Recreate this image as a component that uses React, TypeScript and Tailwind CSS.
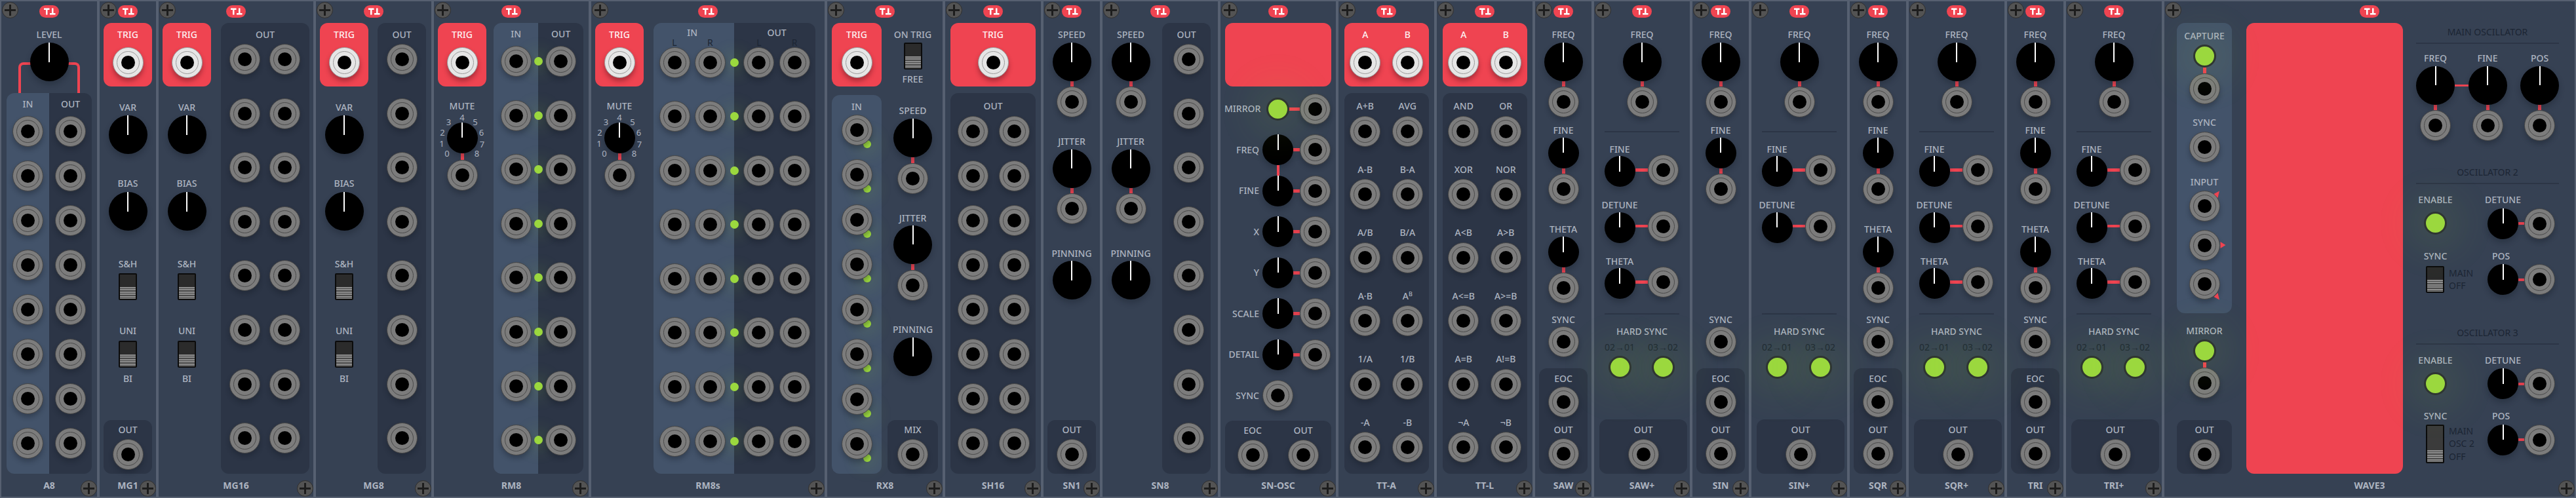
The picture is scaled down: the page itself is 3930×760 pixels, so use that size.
import type { ReactNode } from "react";
import clsx from "clsx";

type Tone = "gray" | "white" | "dark";

function Label({ children, tone = "gray", className }: { children: ReactNode; tone?: Tone; className?: string }) {
  return (
    <div
      className={clsx(
        "h-4 shrink-0 whitespace-nowrap text-center text-[14px] leading-4",
        tone === "gray" && "font-medium text-[#adb4c0]",
        tone === "white" && "font-medium text-[#fdf0f1]",
        tone === "dark" && "text-[#1c2533]",
        className
      )}
    >
      {children}
    </div>
  );
}

function Jack({ white, className, children }: { white?: boolean; className?: string; children?: ReactNode }) {
  return (
    <div
      className={clsx(
        "relative flex size-[47px] shrink-0 items-center justify-center rounded-full border shadow-[0_5px_7px_rgba(17,22,32,0.3)]",
        white ? "border-[#9a9a9a] bg-[#e6e6e6]" : "border-[#454545] bg-[#7c7c7c]",
        className
      )}
    >
      <div
        className={clsx(
          "flex size-[35px] items-center justify-center rounded-full border",
          white ? "border-[#9a9a9a]" : "border-[#4a4a4a]"
        )}
      >
        <div className="size-[21px] rounded-full bg-black" />
      </div>
      {children}
    </div>
  );
}

function Knob({ small, className, children }: { small?: boolean; className?: string; children?: ReactNode }) {
  return (
    <div
      className={clsx(
        "relative flex shrink-0 justify-center rounded-full bg-black shadow-[0_5px_8px_rgba(17,22,32,0.3)]",
        small ? "size-[47px]" : "size-[59px]",
        className
      )}
    >
      <div className="h-1/2 w-[2px] bg-white" />
      {children}
    </div>
  );
}

function Wire({ className }: { className?: string }) {
  return <div className={clsx("shrink-0 bg-[#ef4451]", className)} />;
}

function Stem({ className }: { className?: string }) {
  return <Wire className={clsx("w-[5px]", className)} />;
}

function Led({ className }: { className?: string }) {
  return (
    <div
      className={clsx(
        "shrink-0 rounded-full bg-[#9bd83e] shadow-[0_0_26px_10px_rgba(155,216,62,0.13)]",
        className
      )}
    />
  );
}

function LedButton({ className }: { className?: string }) {
  return (
    <div
      className={clsx(
        "relative z-[1] size-[35px] shrink-0 rounded-full border-[3px] border-[#2f3632] bg-[#9bd83e] shadow-[0_0_60px_22px_rgba(155,216,62,0.11)]",
        className
      )}
    />
  );
}

function Switch({ tall, className }: { tall?: boolean; className?: string }) {
  return (
    <div
      className={clsx(
        "flex w-[28px] shrink-0 flex-col rounded-[2px] bg-[#0b0b0b] p-[2px]",
        tall ? "h-[59px]" : "h-[41px]",
        className
      )}
    >
      <div className={clsx("flex-1", tall ? "bg-[#3b3b3b]" : "bg-[#2b2b2b]")} />
      <div className="h-[18px] bg-[repeating-linear-gradient(to_bottom,#8c8c8c_0px,#8c8c8c_2px,#4b4b4b_2px,#4b4b4b_3.4px)]" />
    </div>
  );
}

function Screw({ className }: { className?: string }) {
  return (
    <div
      className={clsx(
        "absolute z-10 flex size-[25px] items-center justify-center rounded-full border-[1.5px] border-[#2f2f2f] bg-[#535353]",
        className
      )}
    >
      <svg width="17" height="17" viewBox="0 0 17 17">
        <path d="M0 8.5H17M8.5 0V17" stroke="#1d1d1d" strokeWidth="3" />
      </svg>
    </div>
  );
}

function Logo() {
  return (
    <div className="mt-[6px] h-[19px] w-[30px] shrink-0 rounded-full bg-[#ef4451]">
      <svg width="30" height="19" viewBox="0 0 30 19">
        <path d="M7 4.5H15.5V7H12.5V14.5H10V7H7Z M19 4.5H21.5V12H24.5V14.5H16V12H19Z" fill="#ffffff" />
      </svg>
    </div>
  );
}

function Module({ width, title, children }: { width: string; title: string; children: ReactNode }) {
  return (
    <div className={clsx("relative flex h-[760px] shrink-0 flex-col items-center border-2 border-[#566071] bg-[#364153]", width)}>
      <Screw className="left-[0.5px] top-[0.5px]" />
      <Logo />
      <div className="mt-[8px] flex h-[688px] w-full px-[6px]">{children}</div>
      <div className="mt-[10px] h-4 text-center text-[14px] font-bold leading-4 text-[#adb4c0]">{title}</div>
      <Screw className="bottom-[0.5px] right-[0.5px]" />
    </div>
  );
}

function RedPanel({ labels = ["TRIG"], className }: { labels?: string[]; className?: string }) {
  return (
    <div
      className={clsx(
        "grid h-[97px] shrink-0 content-start rounded-xl bg-[#ef4451] pt-[10px]",
        labels.length > 1 ? "grid-cols-2" : "grid-cols-1",
        className
      )}
    >
      {labels.map((label) => (
        <div key={label} className="flex flex-col items-center">
          <Label tone="white">{label}</Label>
          <Jack white className="mt-[11px] shadow-[0_5px_7px_rgba(90,20,30,0.45)]" />
        </div>
      ))}
    </div>
  );
}

function OutPanel({ label = "OUT", className }: { label?: string; className?: string }) {
  return (
    <div className={clsx("mt-auto flex h-[82px] w-full shrink-0 flex-col items-center rounded-xl bg-[#2c3546] pt-[7px]", className)}>
      <Label>{label}</Label>
      <Jack className="mt-[6px]" />
    </div>
  );
}

function MgControls({ children }: { children?: ReactNode }) {
  return (
    <div className="flex h-full w-[74px] shrink-0 flex-col items-center">
      <RedPanel className="w-full" />
      <Label className="mt-[24px]">VAR</Label>
      <Knob className="mt-[4px]" />
      <Label className="mt-[37px]">BIAS</Label>
      <Knob className="mt-[5px]" />
      <Label className="mt-[43px]">S&amp;H</Label>
      <Switch className="mt-[6px]" />
      <Label className="mt-[39px]">UNI</Label>
      <Switch className="mt-[7px]" />
      <Label className="mt-[9px]">BI</Label>
      {children}
    </div>
  );
}

function OutColumn({ className, jacks = 8 }: { className?: string; jacks?: number }) {
  return (
    <div className={clsx("flex flex-col items-center gap-y-[35.6px]", className)}>
      {Array.from({ length: jacks }, (_, i) => (
        <Jack key={i} />
      ))}
    </div>
  );
}

const dialMarks = [
  { n: "0", pos: "-left-[5.5px] top-[40.5px]" },
  { n: "1", pos: "-left-[13.5px] top-[25px]" },
  { n: "2", pos: "-left-[12.5px] top-[8.5px]" },
  { n: "3", pos: "-left-[3px] -top-[8px]" },
  { n: "4", pos: "left-[17.5px] -top-[14.5px]" },
  { n: "5", pos: "left-[37.5px] -top-[8px]" },
  { n: "6", pos: "left-[47px] top-[8.5px]" },
  { n: "7", pos: "left-[48px] top-[26.5px]" },
  { n: "8", pos: "left-[40px] top-[40.5px]" },
];

function MuteControls() {
  return (
    <div className="flex h-full w-[74px] shrink-0 flex-col items-center">
      <RedPanel className="w-full" />
      <Label className="mt-[22px]">MUTE</Label>
      <Knob small className="mt-[16.5px]">
        {dialMarks.map((m) => (
          <span key={m.n} className={clsx("absolute h-[14px] w-[12px] text-center text-[13px] leading-[14px] text-[#adb4c0]", m.pos)}>
            {m.n}
          </span>
        ))}
      </Knob>
      <Stem className="h-[10.5px]" />
      <Jack />
    </div>
  );
}

function SpeedStack({ children }: { children?: ReactNode }) {
  return (
    <div className="flex h-full w-[74px] shrink-0 flex-col items-center pt-[10px]">
      <Label>SPEED</Label>
      <Knob className="mt-[4px]" />
      <Stem className="h-[8px]" />
      <Jack />
      <Label className="mt-[29px]">JITTER</Label>
      <Knob className="mt-[3.5px]" />
      <Stem className="h-[8px]" />
      <Jack />
      <Label className="mt-[37px]">PINNING</Label>
      <Knob className="mt-[3.5px]" />
      {children}
    </div>
  );
}

function WaveStack({ theta = true }: { theta?: boolean }) {
  return (
    <div className="flex h-full w-full flex-col items-center pt-[10px]">
      <Label>FREQ</Label>
      <Knob className="mt-[4px]" />
      <Stem className="h-[8px]" />
      <Jack />
      <Label className="mt-[12px]">FINE</Label>
      <Knob small className="mt-[2.5px]" />
      <Stem className="h-[8.5px]" />
      <Jack />
      {theta ? (
        <div className="flex h-[151px] flex-col items-center">
          <Label className="mt-[30px]">THETA</Label>
          <Knob small className="mt-[3px]" />
          <Stem className="h-[8px]" />
          <Jack />
        </div>
      ) : (
        <div className="h-[151px]" />
      )}
      <Label className="mt-[16.5px]">SYNC</Label>
      <Jack className="mt-[2.5px]" />
      <div className="mt-auto flex h-[161px] w-full flex-col items-center rounded-xl bg-[#2c3546] pt-[8px]">
        <Label>EOC</Label>
        <Jack className="mt-[4px]" />
        <Label className="mt-[11px]">OUT</Label>
        <Jack className="mt-[4.5px]" />
      </div>
    </div>
  );
}

function KnobRow({ label }: { label: string }) {
  return (
    <div className="flex items-start pl-[9.5px]">
      <div className="flex w-[47px] flex-col items-center">
        <Label>{label}</Label>
        <Knob small className="mt-[2.5px]" />
      </div>
      <Wire className="mt-[37.5px] h-[4.5px] w-[19px]" />
      <Jack className="mt-[16.5px]" />
    </div>
  );
}

function Divider({ className }: { className?: string }) {
  return <div className={clsx("h-[2px] w-[114px] shrink-0 bg-[#2c3546]", className)} />;
}

function WavePlusStack({ theta = true }: { theta?: boolean }) {
  return (
    <div className="flex h-full w-full flex-col items-center pt-[10px]">
      <Label>FREQ</Label>
      <Knob className="mt-[4px]" />
      <Stem className="h-[8px]" />
      <Jack />
      <Divider className="mt-[20.5px]" />
      <div className="mt-[18px] flex h-[237px] w-full shrink-0 flex-col gap-y-[20.2px]">
        <KnobRow label="FINE" />
        <KnobRow label="DETUNE" />
        {theta && <KnobRow label="THETA" />}
      </div>
      <Divider className="mt-[21px]" />
      <Label className="mt-[18.5px]">HARD SYNC</Label>
      <div className="mt-[7.5px] grid w-full grid-cols-[66px_66px]">
        <div className="flex flex-col items-center">
          <Label tone="dark">02→01</Label>
          <LedButton className="mt-[5.5px]" />
        </div>
        <div className="flex flex-col items-center">
          <Label tone="dark">03→02</Label>
          <LedButton className="mt-[5.5px]" />
        </div>
      </div>
      <OutPanel className="ml-[4px] h-[83px] w-[128.5px] pt-[8px]" />
    </div>
  );
}

function LogicGrid({ rows }: { rows: [ReactNode, ReactNode][] }) {
  return (
    <div className="mx-[2.5px] flex h-full flex-1 flex-col">
      <RedPanel labels={["A", "B"]} />
      <div className="mt-[10px] grid flex-1 grid-cols-2 content-start gap-y-[27.1px] rounded-xl bg-[#2c3546] pt-[12px]">
        {rows.flat().map((label, i) => (
          <div key={i} className="flex flex-col items-center">
            <Label>{label}</Label>
            <Jack className="mt-[6.5px]" />
          </div>
        ))}
      </div>
    </div>
  );
}

function OscRow({ label, control, extra }: { label: string; control: ReactNode; extra?: ReactNode }) {
  return (
    <div className="flex h-[47px] items-center">
      <div className="w-[53px] whitespace-nowrap text-right text-[14px] font-medium leading-4 text-[#adb4c0]">{label}</div>
      <div className="relative ml-[5px] flex w-[47px] shrink-0 justify-center">
        {control}
        {extra}
      </div>
    </div>
  );
}

function OscKnobRow({ label, linked }: { label: string; linked?: boolean }) {
  return (
    <div className="flex h-[47px] items-center">
      <OscRow
        label={label}
        control={<Knob small />}
        extra={linked && <Wire className="absolute -top-[15.5px] left-[21.5px] h-[16px] w-[4px]" />}
      />
      <Wire className="h-[5px] w-[10px]" />
      <Jack />
    </div>
  );
}

function KnobJackPair({ label, shiftLabel }: { label: string; shiftLabel?: boolean }) {
  return (
    <div className="flex flex-col">
      <div className="flex w-[47px] justify-center">
        <Label className={clsx(shiftLabel && "mr-[6px]")}>{label}</Label>
      </div>
      <div className="mt-[4.5px] flex items-center">
        <Knob small />
        <Wire className="h-[4px] w-[9px]" />
        <Jack />
      </div>
    </div>
  );
}

function OscSection({ title, threeWay }: { title: string; threeWay?: boolean }) {
  return (
    <div className="flex h-[244.5px] shrink-0 flex-col">
      <Label tone="dark">{title}</Label>
      <div className="mt-[8px] h-[2px] shrink-0 bg-[#2c3546]" />
      <div className="mt-[16.4px] flex h-[85.6px] shrink-0">
        <div className="flex w-[59px] flex-col items-center">
          <Label>ENABLE</Label>
          <LedButton className="mt-[10px]" />
        </div>
        <div className="ml-[50px]">
          <KnobJackPair label="DETUNE" />
        </div>
      </div>
      <div className="flex">
        <div className="flex w-[109px] flex-col">
          <div className="flex w-[59px] justify-center">
            <Label>SYNC</Label>
          </div>
          <div className={clsx("ml-[15px] flex items-center", threeWay ? "mt-[4.5px]" : "mt-[7px]")}>
            <Switch tall={threeWay} />
            <div className="ml-[7px] flex flex-col gap-y-[3.5px]">
              <Label tone="dark" className="text-left">MAIN</Label>
              {threeWay && <Label tone="dark" className="text-left">OSC 2</Label>}
              <Label tone="dark" className="text-left">OFF</Label>
            </div>
          </div>
        </div>
        <KnobJackPair label="POS" shiftLabel />
      </div>
    </div>
  );
}

function MainKnob({ label, wired }: { label: string; wired?: boolean }) {
  return (
    <div className="flex flex-col items-center">
      <Label>{label}</Label>
      <Knob className="mt-[4px]">
        {wired && <Wire className="absolute -left-[20.5px] top-[28px] h-[3px] w-[21px]" />}
      </Knob>
      <Stem className="h-[8.5px]" />
      <Jack />
    </div>
  );
}

function Arrow({ points }: { points: string }) {
  return (
    <svg className="absolute left-1/2 top-1/2 size-[80px] -translate-x-1/2 -translate-y-1/2" viewBox="-40 -40 80 80">
      <polygon points={points} fill="#ef4451" />
    </svg>
  );
}

function Rack() {
  return (
    <div className="flex h-[760px] w-[3930px] bg-[#566071] font-['Noto_Sans',sans-serif]">
      <Module width="w-[150px]" title="A8">
        <div className="flex h-full w-full flex-col">
          <div className="relative flex h-[107px] justify-center pt-[30px]">
            <Wire className="absolute bottom-0 left-[20px] h-[47px] w-[94px] rounded-t-lg border-x-4 border-t-4 border-[#ef4451] bg-transparent" />
            <Label className="absolute left-0 right-0 top-[10px]">LEVEL</Label>
            <Knob />
          </div>
          <div className="mx-[2px] grid flex-1 grid-cols-2 overflow-hidden rounded-xl">
            <div className="flex flex-col items-center bg-[#43536a] pt-[9px]">
              <Label>IN</Label>
              <div className="mt-[10px] flex flex-col gap-y-[21px]">
                {Array.from({ length: 8 }, (_, i) => <Jack key={i} />)}
              </div>
            </div>
            <div className="flex flex-col items-center bg-[#2c3546] pt-[9px]">
              <Label>OUT</Label>
              <div className="mt-[10px] flex flex-col gap-y-[21px]">
                {Array.from({ length: 8 }, (_, i) => <Jack key={i} />)}
              </div>
            </div>
          </div>
        </div>
      </Module>

      <Module width="w-[90px]" title="MG1">
        <MgControls>
          <OutPanel />
        </MgControls>
      </Module>

      <Module width="w-[240px]" title="MG16">
        <MgControls />
        <div className="ml-[15px] flex h-full w-[135px] flex-col rounded-xl bg-[#2c3546] pt-[10px]">
          <Label>OUT</Label>
          <div className="mt-[6px] grid grid-cols-[61px_61px] gap-y-[35.6px] pl-[6px]">
            {Array.from({ length: 16 }, (_, i) => (
              <div key={i} className="flex justify-center"><Jack /></div>
            ))}
          </div>
        </div>
      </Module>

      <Module width="w-[180px]" title="MG8">
        <MgControls />
        <div className="ml-[14px] flex h-full w-[74px] flex-col items-center rounded-xl bg-[#2c3546] pt-[10px]">
          <Label>OUT</Label>
          <OutColumn className="mt-[6px]" />
        </div>
      </Module>

      <Module width="w-[240px]" title="RM8">
        <MuteControls />
        <div className="ml-[10.6px] flex h-full w-[137.4px] flex-col rounded-xl bg-[linear-gradient(to_right,#43536a_50%,#2c3546_50%)] pl-[11px] pt-[9px]">
          <div className="flex gap-x-[21.6px]">
            <Label className="w-[47px]">IN</Label>
            <Label className="w-[47px]">OUT</Label>
          </div>
          <div className="mt-[10px] flex flex-col gap-y-[35.6px]">
            {Array.from({ length: 8 }, (_, i) => (
              <div key={i} className="flex items-center gap-x-[4.3px]">
                <Jack className="z-[1]" />
                <Led className="size-[13px]" />
                <Jack className="z-[1]" />
              </div>
            ))}
          </div>
        </div>
      </Module>

      <Module width="w-[360px]" title="RM8s">
        <MuteControls />
        <div className="ml-[15px] flex h-full w-[247px] flex-col rounded-xl bg-[linear-gradient(to_right,#43536a_50%,#2c3546_50%)] pl-[8.5px] pt-[7px]">
          <div className="flex gap-x-[27.6px]">
            <div className="flex w-[101.3px] flex-col items-center">
              <Label>IN</Label>
              <div className="-mt-[1px] flex w-full justify-between">
                <Label tone="dark" className="w-[47px]">L</Label>
                <Label tone="dark" className="w-[47px]">R</Label>
              </div>
            </div>
            <div className="flex w-[101.3px] flex-col items-center">
              <Label>OUT</Label>
              <div className="-mt-[1px] flex w-full justify-between">
                <Label tone="dark" className="w-[47px]">L</Label>
                <Label tone="dark" className="w-[47px]">R</Label>
              </div>
            </div>
          </div>
          <div className="mt-[-1.5px] flex flex-col gap-y-[35.6px]">
            {Array.from({ length: 8 }, (_, i) => (
              <div key={i} className="flex items-center gap-x-[7.3px]">
                <Jack className="z-[1]" />
                <Jack className="z-[1]" />
                <Led className="size-[13px]" />
                <Jack className="z-[1]" />
                <Jack className="z-[1]" />
              </div>
            ))}
          </div>
        </div>
      </Module>

      <Module width="w-[180px]" title="RX8">
        <div className="ml-[1px] flex h-full w-[76px] shrink-0 flex-col">
          <RedPanel />
          <div className="mt-[13px] flex flex-1 flex-col items-center rounded-xl bg-[#43536a] pt-[10px]">
            <Label>IN</Label>
            <div className="mt-[3.5px] flex flex-col gap-y-[21.5px]">
              {Array.from({ length: 8 }, (_, i) => (
                <div key={i} className="relative">
                  <Led className="absolute left-[33.5px] top-[39px] size-[12px]" />
                  <Jack />
                </div>
              ))}
            </div>
          </div>
        </div>
        <div className="ml-[9px] flex h-full w-[77px] shrink-0 flex-col items-center pt-[10px]">
          <Label>ON TRIG</Label>
          <Switch className="mt-[4px]" />
          <Label className="mt-[7px]">FREE</Label>
          <Label className="mt-[32px]">SPEED</Label>
          <Knob className="mt-[4px]" />
          <Stem className="h-[8.5px]" />
          <Jack />
          <Label className="mt-[29px]">JITTER</Label>
          <Knob className="mt-[3px]" />
          <Stem className="h-[9px]" />
          <Jack />
          <Label className="mt-[36.5px]">PINNING</Label>
          <Knob className="mt-[3.5px]" />
          <OutPanel label="MIX" />
        </div>
      </Module>

      <Module width="w-[150px]" title="SH16">
        <div className="mx-[2px] flex h-full flex-1 flex-col">
          <RedPanel />
          <div className="mt-[10px] flex flex-1 flex-col rounded-xl bg-[#2c3546] pt-[11.5px]">
            <Label>OUT</Label>
            <div className="mt-[7px] grid grid-cols-[63px_63px] gap-y-[21px] pl-[2.5px]">
              {Array.from({ length: 16 }, (_, i) => (
                <div key={i} className="flex justify-center"><Jack /></div>
              ))}
            </div>
          </div>
        </div>
      </Module>

      <Module width="w-[90px]" title="SN1">
        <SpeedStack>
          <OutPanel />
        </SpeedStack>
      </Module>

      <Module width="w-[180px]" title="SN8">
        <SpeedStack />
        <div className="ml-[11px] flex h-full w-[74px] flex-col items-center rounded-xl bg-[#2c3546] pt-[10px]">
          <Label>OUT</Label>
          <OutColumn className="ml-[6px] mt-[6px]" />
        </div>
      </Module>

      <Module width="w-[180px]" title="SN-OSC">
        <div className="flex h-full w-full flex-col">
          <div className="mx-[1px] h-[97px] shrink-0 rounded-xl bg-[#ef4451]" />
          <div className="mt-[10.5px] flex h-[47px] items-center">
            <OscRow label="MIRROR" control={<LedButton />} />
            <Wire className="-ml-[7px] h-[5px] w-[17px]" />
            <Jack />
          </div>
          <div className="mt-[15.5px] flex flex-col gap-y-[15.5px]">
            <OscKnobRow label="FREQ" />
            <OscKnobRow label="FINE" linked />
            <OscKnobRow label="X" />
            <OscKnobRow label="Y" />
            <OscKnobRow label="SCALE" />
            <OscKnobRow label="DETAIL" />
            <OscRow label="SYNC" control={<Jack />} />
          </div>
          <div className="mx-[1px] mt-auto grid h-[81px] shrink-0 grid-cols-[77px_77px] rounded-xl bg-[#2c3546] pl-[3.5px] pt-[7px]">
            <div className="flex flex-col items-center">
              <Label>EOC</Label>
              <Jack className="mt-[6px]" />
            </div>
            <div className="flex flex-col items-center">
              <Label>OUT</Label>
              <Jack className="mt-[6px]" />
            </div>
          </div>
        </div>
      </Module>

      <Module width="w-[150px]" title="TT-A">
        <LogicGrid
          rows={[
            ["A+B", "AVG"],
            ["A-B", "B-A"],
            ["A/B", "B/A"],
            ["A·B", <>A<sup className="text-[9px]">B</sup></>],
            ["1/A", "1/B"],
            ["-A", "-B"],
          ]}
        />
      </Module>

      <Module width="w-[150px]" title="TT-L">
        <LogicGrid
          rows={[
            ["AND", "OR"],
            ["XOR", "NOR"],
            ["A<B", "A>B"],
            ["A<=B", "A>=B"],
            ["A=B", "A!=B"],
            ["¬A", "¬B"],
          ]}
        />
      </Module>

      <Module width="w-[90px]" title="SAW"><WaveStack /></Module>
      <Module width="w-[150px]" title="SAW+"><WavePlusStack /></Module>
      <Module width="w-[90px]" title="SIN"><WaveStack theta={false} /></Module>
      <Module width="w-[150px]" title="SIN+"><WavePlusStack theta={false} /></Module>
      <Module width="w-[90px]" title="SQR"><WaveStack /></Module>
      <Module width="w-[150px]" title="SQR+"><WavePlusStack /></Module>
      <Module width="w-[90px]" title="TRI"><WaveStack /></Module>
      <Module width="w-[150px]" title="TRI+"><WavePlusStack /></Module>

      <Module width="w-[630px]" title="WAVE3">
        <div className="ml-[13px] flex h-full w-[84px] shrink-0 flex-col items-center">
          <div className="flex h-[442.5px] w-full shrink-0 flex-col items-center rounded-xl bg-[#43536a] pt-[12px]">
            <Label>CAPTURE</Label>
            <LedButton className="mt-[4.5px]" />
            <Stem className="h-[9px]" />
            <Jack />
            <Label className="mt-[20.5px]">SYNC</Label>
            <Jack className="mt-[5.5px]" />
            <Label className="mt-[22.5px]">INPUT</Label>
            <div className="mt-[5px] flex flex-col gap-y-[12.7px]">
              <Jack><Arrow points="23,-23.5 14.5,-19 20.5,-13" /></Jack>
              <Jack><Arrow points="24.5,-5 32.5,0 24.5,5" /></Jack>
              <Jack><Arrow points="23,23.5 14.5,19 20.5,13" /></Jack>
            </div>
          </div>
          <Label className="mt-[19.5px]">MIRROR</Label>
          <LedButton className="mt-[4.5px]" />
          <Stem className="h-[8.5px]" />
          <Jack />
          <OutPanel className="w-[77px]" />
        </div>
        <div className="ml-[22px] h-full w-[239px] shrink-0 rounded-xl bg-[#ef4451]" />
        <div className="ml-[20px] flex h-full w-[218px] shrink-0 flex-col pt-[6px]">
          <Label tone="dark">MAIN OSCILLATOR</Label>
          <div className="mt-[7.5px] h-[2px] shrink-0 bg-[#2c3546]" />
          <div className="mt-[14px] flex gap-x-[20.5px]">
            <MainKnob label="FREQ" />
            <MainKnob label="FINE" wired />
            <MainKnob label="POS" />
          </div>
          <div className="h-[40px] shrink-0" />
          <OscSection title="OSCILLATOR 2" />
          <OscSection title="OSCILLATOR 3" threeWay />
        </div>
      </Module>
    </div>
  );
}

export default function App() {
  return <Rack />;
}
